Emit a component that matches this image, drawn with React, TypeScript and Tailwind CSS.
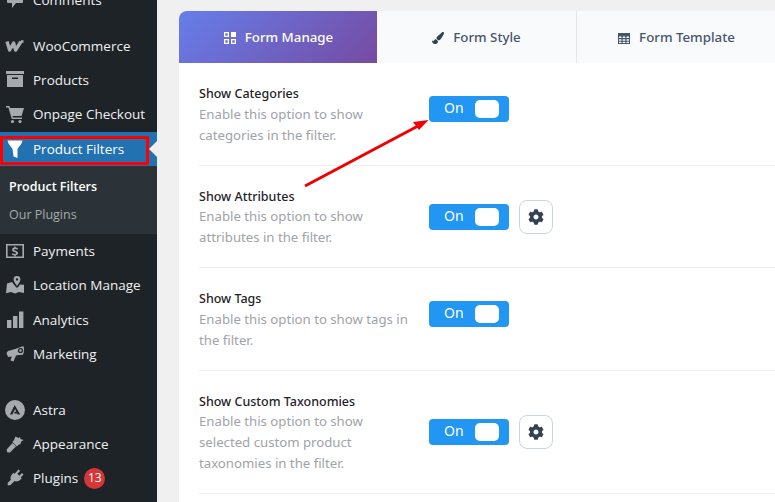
import React from "react";
import { FaCog, FaPaintBrush } from "react-icons/fa";

const I = ({ children }: { children: React.ReactNode }) => (
  <svg viewBox="0 0 20 20" width="20" height="20" fill="currentColor">{children}</svg>
);

const icons: Record<string, React.ReactNode> = {
  comments: <I><path d="M2 2h15a1 1 0 0 1 1 1v9a1 1 0 0 1-1 1h-6l-4 5v-5H3a1 1 0 0 1-1-1V3a1 1 0 0 1 1-1z" /></I>,
  woo: (
    <svg viewBox="0 0 20 12" width="20" height="12" fill="none" stroke="currentColor" strokeWidth="3.4" strokeLinejoin="round">
      <path d="M2 1.500 4.600 10 8.600 3 10.600 10 16 1.500" />
      <path d="M16 1.500 18.500 1.500" strokeWidth="2.600" />
    </svg>
  ),
  products: <I><path d="M1 1h18v3H1zM2 5h16v12H2zm5 2.500V9h6V7.500z" fillRule="evenodd" /></I>,
  cart: <I><path d="M1 2h3.400l.7 2H19l-2.400 8H7.400l.5 1.600H17V15H6.800L3.400 3.500H1z" /><circle cx="7.500" cy="17.500" r="1.600" /><circle cx="15" cy="17.500" r="1.600" /></I>,
  filter: <I><path d="M2.500 1.500h15l-1 3-4 5.500V19L8.500 17.500 7.500 10 3.500 4.500z" /></I>,
  payments: <I><path d="M1 3h18v14H1zm1.600 1.600v10.800h14.800V4.600z" fillRule="evenodd" /><path d="M9.300 5.500h1.400v1.100c1 .1 1.800.4 2.300.7l-.5 1.300c-.6-.3-1.400-.6-2.200-.6-.8 0-1.200.3-1.200.7 0 .5.5.7 1.600 1.100 1.500.5 2.300 1.100 2.300 2.300 0 1.100-.8 2-2.300 2.200v1.200H9.300v-1.100c-1-.1-1.900-.4-2.500-.8l.5-1.300c.7.4 1.500.7 2.400.7.8 0 1.300-.3 1.300-.8s-.5-.8-1.500-1.100c-1.400-.5-2.400-1-2.400-2.300 0-1.100.8-1.900 2.200-2.200z" /></I>,
  location: <I><path d="M12 1a3.400 3.400 0 0 1 3.400 3.400c0 2.200-2.400 4.600-3.400 6.600-1-2-3.400-4.400-3.400-6.600A3.400 3.400 0 0 1 12 1zm0 2.200a1.200 1.200 0 1 0 0 2.400 1.200 1.200 0 0 0 0-2.400z" fillRule="evenodd" /><path d="M2 8.500l5-1.600 4.200 5.600h1.600L15 9.600l4 .2V18l-5-1-4 1.400L6 17l-5 1.200z" /></I>,
  analytics: <I><path d="M2 10h4.400v8H2zM8 6h4.400v12H8zM14 1.500h4.400V18H14z" /></I>,
  marketing: <I><path d="M18.400 2c.9 2.500.9 6.500-.4 8.800L14 11l-3 .5L8.500 17.500l-3-1 1.300-4L3 13 1.500 9 3 7l8-2.300z" /><circle cx="15.500" cy="6.500" r="2.600" fill="#1d2327" /><circle cx="15.500" cy="6.500" r="1.300" /></I>,
  astra: <I><path fillRule="evenodd" d="M10 0a10 10 0 1 1 0 20 10 10 0 0 1 0-20zM9.600 5 5 14.500h2.400L10 9l1.300 2.700H9.800l-.8 1.700h3.100l.6 1.100H15.200z" /></I>,
  appearance: <I><path d="M10.500 2.500l3 1.500 1.600-.9 .4 1.800 3.200 1-2.500 1.500-.7 2.700-2 .6-1.600 1.800-4.600-4.600 1.700-1.800zM7.500 9l3.600 3.600-1.700 1.500L5 18.500l-3-.3-.2-3 4.400-4.800z" /></I>,
  plugins: <I><path d="M13.500 1.500l1.600 1.500-2.700 2.800 1.900 1.900 2.700-2.700 1.500 1.500-2.800 2.900 1 1-1.800 1.700c-1.600 1.500-3.700 1.800-5.300 1L5.500 17l-2.700.4L2.600 15l3.300-3.200c-.8-1.600-.4-3.700 1-5.300l1.700-1.700 1 1z" /></I>,
};

const Nav = ({ icon, label, active, children }: { icon: string; label: string; active?: boolean; children?: React.ReactNode }) => (
  <div className={`relative flex h-[34px] shrink-0 items-center text-[13.5px] ${active ? "bg-[#2271b1] text-white" : "text-[#f0f0f1]"}`}>
    <span className={`mr-[3px] flex w-[30px] shrink-0 items-center justify-center ${active ? "text-white" : "text-[#a7aaad]"}`}>{icons[icon]}</span>
    <span>{label}</span>
    {children}
    {active && <span className="absolute right-0 top-1/2 h-0 w-0 -translate-y-1/2 border-y-[8px] border-r-[8px] border-y-transparent border-r-[#f0f0f1]" />}
  </div>
);

const Toggle = () => (
  <div className="flex h-[26px] w-[80px] items-center justify-between rounded-[4px] bg-[#2196f3] pl-[15px] pr-[10px] text-[14px] text-white">
    <span className="-mt-[3px]">On</span>
    <span className="h-[18px] w-[24px] rounded-[5px] bg-white" />
  </div>
);

const Row = ({ title, lines, gear, h }: { title: string; lines: string[]; gear?: boolean; h: string }) => (
  <div className={`flex ${h} items-center border-b border-[#eceef1] text-[13.2px]`}>
    <div className="w-[230px] shrink-0 leading-[21px]">
      <div className={`text-[12.5px] font-medium text-[#1f2328] ${gear ? "translate-y-px" : ""}`}>{title}</div>
      {lines.map((l) => (
        <div key={l} className="text-[#a0a3a8]">{l}</div>
      ))}
    </div>
    <div className={`flex items-center gap-[10px] ${gear ? "" : "mb-[10px]"}`}>
      <Toggle />
      {gear && (
        <span className="flex h-[34px] w-[34px] items-center justify-center rounded-[8px] border border-[#cbd5e1] bg-white text-[#334155]">
          <FaCog size={16} />
        </span>
      )}
    </div>
  </div>
);

const Tab = ({ icon, label, w, border }: { icon: React.ReactNode; label: string; w: string; border?: boolean }) => (
  <div className={`flex ${w} shrink-0 items-center justify-center gap-[9px] bg-[#f8fafc] pt-[2px] text-[13.3px] font-medium text-[#475569] ${border ? "border-r border-[#e2e8f0]" : ""}`}>
    {icon}
    <span>{label}</span>
  </div>
);

export default function App() {
  return (
    <div className="relative flex h-[502px] w-[775px] overflow-hidden bg-[#f0f0f0] font-['Noto_Sans',sans-serif]">
      <aside className="flex w-[157px] shrink-0 flex-col overflow-hidden bg-[#1d2327] font-['Open_Sans',sans-serif]">
        <div className="-mt-[17px] mb-[12px]"><Nav icon="comments" label="Comments" /></div>
        <Nav icon="woo" label="WooCommerce" />
        <Nav icon="products" label="Products" />
        <div className="h-[35px] shrink-0"><Nav icon="cart" label="Onpage Checkout" /></div>
        <Nav icon="filter" label="Product Filters" active />
        <div className="flex h-[68px] shrink-0 flex-col gap-[9px] bg-[#2c3338] pl-[9px] pt-[11px] text-[12.5px] leading-[19px]">
          <div className="font-semibold text-white">Product Filters</div>
          <div className="text-[#a7aaad]">Our Plugins</div>
        </div>
        <Nav icon="payments" label="Payments" />
        <div className="h-[35px] shrink-0"><Nav icon="location" label="Location Manage" /></div>
        <Nav icon="analytics" label="Analytics" />
        <div className="mb-[22px]"><Nav icon="marketing" label="Marketing" /></div>
        <Nav icon="astra" label="Astra" />
        <Nav icon="appearance" label="Appearance" />
        <Nav icon="plugins" label="Plugins">
          <span className="ml-[6px] flex h-[21px] w-[21px] items-center justify-center rounded-full bg-[#d63638] text-[12px] text-white">13</span>
        </Nav>
      </aside>

      <main className="ml-[22px] mt-[11px] w-[640px] shrink-0 rounded-t-[8px] bg-white">
        <div className="flex h-[52px] overflow-hidden rounded-tl-[8px]">
          <div className="flex w-[198px] shrink-0 items-center justify-center gap-[9px] bg-[linear-gradient(135deg,#667eea,#764ba2)] pl-[1px] pt-[2px] text-[13.3px] font-medium text-white">
            <svg viewBox="0 0 12 12" width="12" height="12" fill="currentColor">
              <path fillRule="evenodd" d="M0 0h5v5H0zm1.300 1.300v2.400h2.400V1.300zM7 0h5v5H7zM0 7h5v5H0zm1.300 1.300v2.400h2.400V8.300zM7 7h5v5H7zm1.300 1.300v2.400h2.400V8.300z" />
            </svg>
            <span>Form Manage</span>
          </div>
          <Tab w="w-[200px]" border label="Form Style" icon={<FaPaintBrush size={12} className="text-[#334155]" />} />
          <Tab
            w="w-[199px]"
            label="Form Template"
            icon={
              <svg viewBox="0 0 12 11" width="12" height="11">
                <path fill="#475569" fillRule="evenodd" d="M0 0h12v11H0zm1 3.500V5h2.500V3.500zm3.700 0V5h2.600V3.500zm3.800 0V5H11V3.500zM1 6.200v1.500h2.500V6.200zm3.700 0v1.500h2.600V6.200zm3.800 0v1.500H11V6.200zM1 8.800V10h2.500V8.800zm3.700 0V10h2.600V8.800zm3.800 0V10H11V8.800z" />
              </svg>
            }
          />
        </div>
        <div className="pl-[20px]">
          <Row h="h-[103px]" title="Show Categories" lines={["Enable this option to show", "categories in the filter."]} />
          <Row h="h-[102px]" gear title="Show Attributes" lines={["Enable this option to show", "attributes in the filter."]} />
          <Row h="h-[103px]" title="Show Tags" lines={["Enable this option to show tags in", "the filter."]} />
          <Row h="h-[123px]" gear title="Show Custom Taxonomies" lines={["Enable this option to show", "selected custom product", "taxonomies in the filter."]} />
        </div>
      </main>

      <div className="absolute left-0 top-[136px] h-[29px] w-[149px] border-[3px] border-[#ff0000]" />
      <svg className="absolute left-[300px] top-[115px]" width="135" height="75" viewBox="0 0 135 75">
        <path d="M5 71 118 11" stroke="#f00000" strokeWidth="3" fill="none" />
        <path d="M128.500 5 113 7 119 15z" fill="#f00000" />
      </svg>
    </div>
  );
}
